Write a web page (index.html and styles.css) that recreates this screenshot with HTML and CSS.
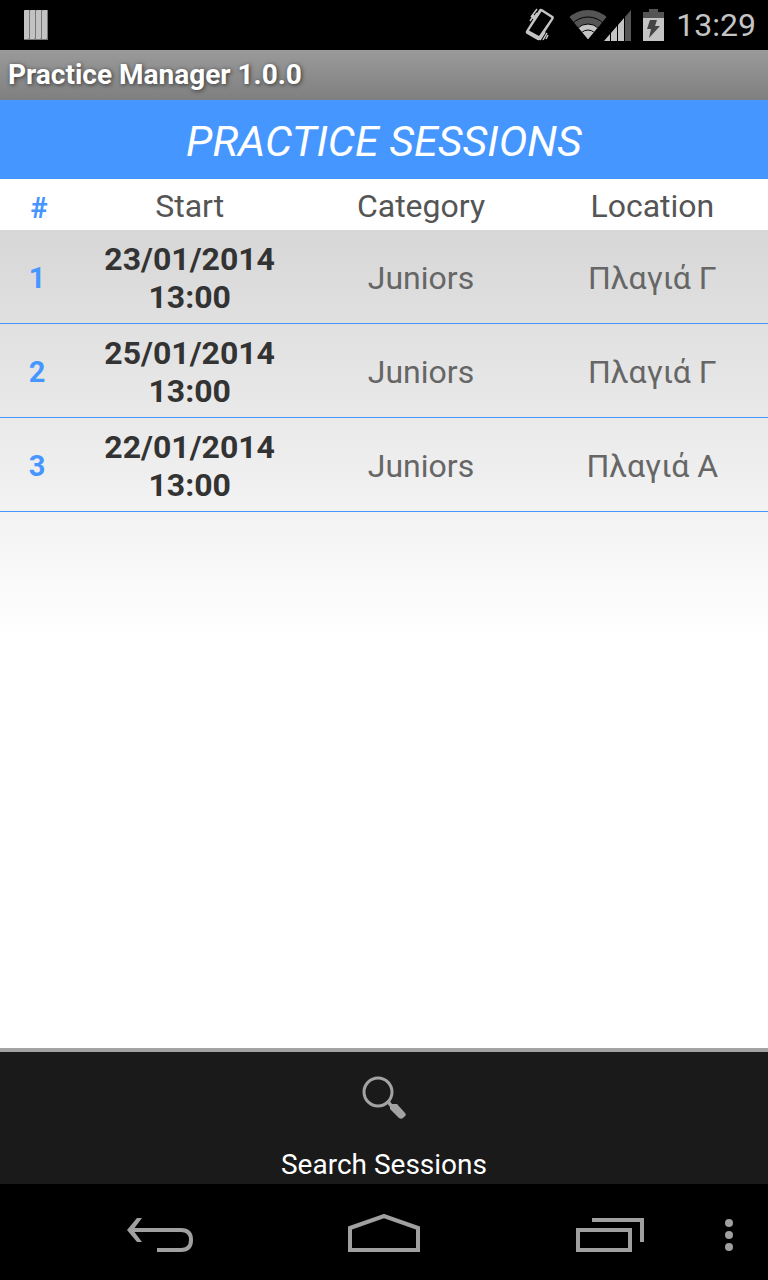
FILE: index.html
```html
<!DOCTYPE html>
<html lang="en">
<head>
    <meta charset="UTF-8">
    <meta name="viewport" content="width=device-width, initial-scale=1.0">
    <title>Practice Manager 1.0.0</title>
    <link rel="stylesheet" href="styles.css">
</head>
<body>
    <div class="status-bar">
        <svg class="notification" width="24" height="30" viewBox="0 0 24 30">
            <path fill="#777" d="M0 0h24v30H0z"/>
            <path fill="#c2c2c2" d="M0 1l1-1h4v28l-1 1H0zM6 1l1-1h4v28l-1 1H6zM12 1l1-1h4v28l-1 1h-4zM18 1l1-1h4v28l-1 1h-4z"/>
        </svg>
        <div class="status-icons">
            <svg width="32" height="34" viewBox="0 0 32 34" fill="none" stroke="#c4c4c4">
                <path fill="#c4c4c4" fill-rule="evenodd" stroke="none" d="M20 1l11 7q1.500 1 .5 3L18.500 31q-1 2-3 1L5 26q-2-1-1-3L17 2q1-2 3-1zM19.500 3.500L7 22.500l10 5.500L29.500 10z"/>
                <path stroke-width="1.500" d="M9 9l6-8M11 11l4-6M8 13l4-6M18 32l5-8M21 32l4-7M24 31l2-4"/>
            </svg>
            <svg width="65" height="32" viewBox="0 0 65 32">
                <clipPath id="fan">
                    <path d="M22 30L0 4V0h44v4z"/>
                </clipPath>
                <g clip-path="url(#fan)">
                    <circle cx="22" cy="30" r="29" fill="#555"/>
                    <circle cx="22" cy="30" r="22" fill="#555" stroke="black"/>
                    <circle cx="22" cy="30" r="15" fill="#c4c4c4" stroke="black"/>
                    <circle cx="22" cy="30" r="9" fill="#c4c4c4" stroke="black"/>
                </g>
                <path fill="#c4c4c4" d="M38 32l6-7v7zM45 24l6-7v15h-6zM52 16l6-7v23h-6z"/>
                <path fill="#555" d="M59 8l6-7v31h-6z"/>
            </svg>
            <svg width="21" height="32" viewBox="0 0 21 32">
                <path fill="#555" d="M6 0h9v3h6v6H0V3h6z"/>
                <path fill="#c4c4c4" d="M0 9h21v23H0z"/>
                <path fill="#444" d="M7 11h7l-2 6h5L6 29l2-9H4z"/>
            </svg>
            <span class="clock">13:29</span>
        </div>
    </div>
    <header class="title-bar">Practice Manager 1.0.0</header>
    <h1>PRACTICE SESSIONS</h1>
    <main>
        <table class="sessions">
            <thead>
                <tr>
                    <th class="number">#</th>
                    <th>Start</th>
                    <th>Category</th>
                    <th>Location</th>
                </tr>
            </thead>
            <tbody>
                <tr>
                    <td class="number">1</td>
                    <td class="start">23/01/2014<br>13:00</td>
                    <td>Juniors</td>
                    <td>Πλαγιά Γ</td>
                </tr>
                <tr>
                    <td class="number">2</td>
                    <td class="start">25/01/2014<br>13:00</td>
                    <td>Juniors</td>
                    <td>Πλαγιά Γ</td>
                </tr>
                <tr>
                    <td class="number">3</td>
                    <td class="start">22/01/2014<br>13:00</td>
                    <td>Juniors</td>
                    <td>Πλαγιά Α</td>
                </tr>
            </tbody>
        </table>
    </main>
    <button class="search" type="button">
        <svg width="46" height="46" viewBox="0 0 46 46">
            <circle cx="17" cy="17" r="14" fill="none" stroke="#a3a3a3" stroke-width="3"/>
            <path fill="#a3a3a3" d="M25 27l3-2 3 4h5l8 9q2 2-1 4-2 3-5 1l-9-9v-2z"/>
        </svg>
        <span>Search Sessions</span>
    </button>
    <nav class="nav-bar">
        <button type="button" aria-label="Back">
            <svg width="68" height="36" viewBox="0 0 68 36" fill="none" stroke="#a0a0a0" stroke-width="4">
                <path d="M3 13h52q10 0 10 10T55 33H31"/>
                <path fill="#a0a0a0" stroke="none" d="M1 13L11 1h5L7 13l9 12h-5z"/>
            </svg>
        </button>
        <button type="button" aria-label="Home">
            <svg width="72" height="42" viewBox="0 0 72 42" fill="none" stroke="#a0a0a0" stroke-width="4">
                <path d="M2 14L36 2l34 12v22H2z"/>
            </svg>
        </button>
        <button type="button" aria-label="Recent apps">
            <svg width="72" height="34" viewBox="-4 0 72 34" fill="none" stroke="#a0a0a0" stroke-width="4">
                <path d="M2 12h52v20H2zM16 2h50v22"/>
            </svg>
        </button>
        <button class="more" type="button" aria-label="More options">
            <svg width="18" height="34" viewBox="0 0 18 34" fill="#a0a0a0">
                <circle cx="9" cy="5" r="4"/>
                <circle cx="9" cy="17" r="4"/>
                <circle cx="9" cy="29" r="4"/>
            </svg>
        </button>
    </nav>
</body>
</html>
```
FILE: styles.css
```css
* {
    box-sizing: border-box;
}
body {
    font-family: Roboto, sans-serif;
    margin: 0;
    min-height: 100vh;
    display: flex;
    flex-direction: column;
    background-color: white;
}
svg {
    display: block;
}
button {
    border: none;
    padding: 0;
    background: none;
    font-family: inherit;
    cursor: pointer;
}
.status-bar {
    display: flex;
    justify-content: space-between;
    align-items: center;
    height: 50px;
    padding: 0 12px 0 24px;
    background-color: black;
}
.status-icons {
    display: flex;
    align-items: center;
    gap: 12px;
}
.clock {
    color: #c4c4c4;
    font-size: 32px;
    line-height: 52px;
}
.title-bar {
    padding: 0 8px;
    background: linear-gradient(#9a9a9a, #7f7f7f);
    color: white;
    font-size: 28px;
    font-weight: bold;
    line-height: 50px;
    text-shadow: 1px 1px 4px #333;
}
h1 {
    margin: 0;
    padding: 4px 0 0;
    background-color: #4597ff;
    color: white;
    font-size: 43px;
    font-style: italic;
    font-weight: normal;
    line-height: 75px;
    text-align: center;
}
main {
    flex: 1;
    background: linear-gradient(#d2d2d2, white 460px);
}
.sessions {
    width: 100%;
    table-layout: fixed;
    border-spacing: 0;
    text-align: center;
    color: #666;
    font-size: 32px;
    line-height: 38px;
}
.sessions th {
    padding: 8px 0 5px;
    background-color: white;
    color: #555;
    font-weight: normal;
}
.sessions td {
    padding: 10px 0 7px;
    border-bottom: 1px solid #4597ff;
}
.sessions .number {
    width: 74px;
    color: #4597ff;
    font-size: 29px;
    font-weight: bold;
}
.sessions th.number {
    padding: 10px 0 3px 4px;
}
.sessions .start {
    color: #333;
    font-weight: bold;
}
.search {
    display: flex;
    flex-direction: column;
    align-items: center;
    gap: 26px;
    padding: 23px 0 2px;
    border-top: 4px solid #a3a3a3;
    background-color: #1a1a1a;
    color: white;
    font-size: 28px;
    line-height: 35px;
}
.nav-bar {
    display: grid;
    grid-template-columns: 1fr 1fr 1fr 48px;
    height: 96px;
    padding-left: 48px;
    padding-top: 6px;
    background-color: black;
}
.nav-bar button {
    display: flex;
    justify-content: center;
    align-items: center;
}
.nav-bar .more {
    justify-content: flex-start;
}
```
